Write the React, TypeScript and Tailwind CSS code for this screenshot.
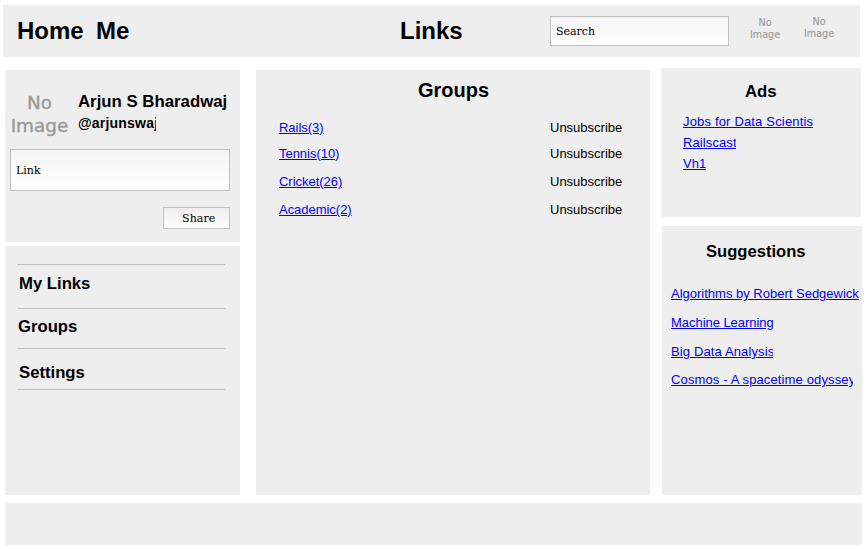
const linkClass =
  "block overflow-hidden whitespace-nowrap text-[13px] leading-4 text-[#0000ff] underline";

function NoImage({ className }: { className: string }) {
  return (
    <div className={`text-center font-['DejaVu_Sans',sans-serif] text-[#999999] ${className}`}>
      No
      <br />
      Image
    </div>
  );
}

function Header() {
  return (
    <header className="ml-[3px] flex h-[52px] w-[857px] items-start bg-[#eeeeee]">
      <nav className="mt-3 flex w-[397px] pl-3.5 text-2xl leading-7 font-bold">
        <a className="w-[79px]">Home</a>
        <a>Me</a>
      </nav>
      <h1 className="mt-3 w-[150px] text-2xl leading-7 font-bold">Links</h1>
      <div className="mt-[11px] flex h-[30px] w-[179px] items-center border border-[#c0c0c0] bg-linear-to-b from-[#f5f5f5] to-white pt-px pl-[5px] font-['DejaVu_Serif',serif] text-[11px] leading-4">
        Search
      </div>
      <NoImage className="mt-3 ml-[21px] w-[30px] text-[9.6px] leading-3 [-webkit-text-stroke:0.1px_#999999]" />
      <NoImage className="mt-[11px] ml-6 w-[30px] text-[9.6px] leading-3 [-webkit-text-stroke:0.1px_#999999]" />
    </header>
  );
}

function Profile() {
  return (
    <section className="h-[172px] bg-[#eeeeee] px-[5px] pt-5">
      <div className="flex h-[59px]">
        <NoImage className="w-[59px] pt-px text-[18.4px] leading-[23px] [-webkit-text-stroke:0.4px_#999999]" />
        <div className="ml-[9px] pt-0.5 whitespace-nowrap">
          <h2 className="text-[16.8px] leading-5 font-bold">Arjun S Bharadwaj</h2>
          <p className="mt-[3px] w-[78px] overflow-hidden text-sm leading-4 font-bold tracking-[0.2px]">@arjunswaj</p>
        </div>
      </div>
      <div className="flex h-[42px] w-[220px] items-center border border-[#c0c0c0] bg-linear-to-b from-[#f5f5f5] to-white pt-px pl-[5px] font-['DejaVu_Serif',serif] text-[11px] leading-4">
        Link
      </div>
      <button className="mt-4 ml-[153px] flex h-[22px] w-[67px] items-center border border-[#c0c0c0] bg-linear-to-b from-[#ededed] to-white pt-px pl-[18px] font-['DejaVu_Serif',serif] text-[11px] leading-4 tracking-[0.1px]">
        Share
      </button>
    </section>
  );
}

function SideMenu() {
  return (
    <nav className="mt-1 h-[249px] bg-[#eeeeee] pt-[18px] pl-3 text-[16.7px] leading-5 font-bold">
      <div className="h-11 w-[208px] border-t border-[#c0c0c0] pt-[9px] pl-0.5">My Links</div>
      <div className="ml-px h-10 w-[208px] border-t border-[#c0c0c0] pt-2">Groups</div>
      <div className="h-[42px] w-[208px] border-y border-[#c0c0c0] pt-3.5 pl-0.5">Settings</div>
    </nav>
  );
}

const groups = [
  { name: "Rails(3)", height: "h-[26px]" },
  { name: "Tennis(10)", height: "h-7" },
  { name: "Cricket(26)", height: "h-7" },
  { name: "Academic(2)", height: "h-7" },
];

function Groups() {
  return (
    <main className="ml-4 h-[425px] w-[394px] bg-[#eeeeee] pt-2">
      <h2 className="pl-[162px] text-xl leading-6 font-bold">Groups</h2>
      <ul className="mt-[18px] pl-[23px]">
        {groups.map((g) => (
          <li key={g.name} className={`flex ${g.height}`}>
            <div className="w-[271px]">
              <a className={`${linkClass} w-fit tracking-[-0.03px]`}>{g.name}</a>
            </div>
            <span className="text-[13px] leading-4">Unsubscribe</span>
          </li>
        ))}
      </ul>
    </main>
  );
}

function Ads() {
  return (
    <section className="h-[149px] w-[200px] bg-[#eeeeee] pt-3.5">
      <h2 className="pl-[84px] text-[16.8px] leading-5 font-bold">Ads</h2>
      <div className="mt-3 flex flex-col gap-[5px] pl-[22px]">
        <a className={`${linkClass} w-[130px] tracking-[0.17px]`}>Jobs for Data Scientist</a>
        <a className={`${linkClass} w-[53px] tracking-[0.1px]`}>Railscast</a>
        <a className={`${linkClass} w-fit`}>Vh1</a>
      </div>
    </section>
  );
}

function Suggestions() {
  return (
    <section className="mt-[9px] ml-px h-[269px] w-[200px] bg-[#eeeeee] pt-4">
      <h2 className="pl-11 text-[16.6px] leading-5 font-bold">Suggestions</h2>
      <div className="mt-6 flex flex-col pl-[9px]">
        <a className={`${linkClass} w-[188px]`}>Algorithms by Robert Sedgewick</a>
        <a className={`${linkClass} mt-[13px] w-[102px] tracking-[-0.04px]`}>Machine Learning</a>
        <a className={`${linkClass} mt-[13px] w-[102px] tracking-[0.13px]`}>Big Data Analysis</a>
        <a className={`${linkClass} mt-3 w-[182px] tracking-[0.13px]`}>Cosmos - A spacetime odyssey</a>
      </div>
    </section>
  );
}

export default function App() {
  return (
    <div className="h-[549px] w-[868px] overflow-hidden bg-white pt-[5px] font-['Liberation_Sans',Arial,sans-serif] text-black">
      <Header />
      <div className="flex h-[438px] items-start pt-[11px] pl-[5px]">
        <aside className="mt-0.5 w-[235px]">
          <Profile />
          <SideMenu />
        </aside>
        <div className="mt-0.5">
          <Groups />
        </div>
        <aside className="ml-[11px]">
          <Ads />
          <Suggestions />
        </aside>
      </div>
      <footer className="mt-2 ml-[5px] h-[42px] w-[857px] bg-[#eeeeee]" />
    </div>
  );
}
